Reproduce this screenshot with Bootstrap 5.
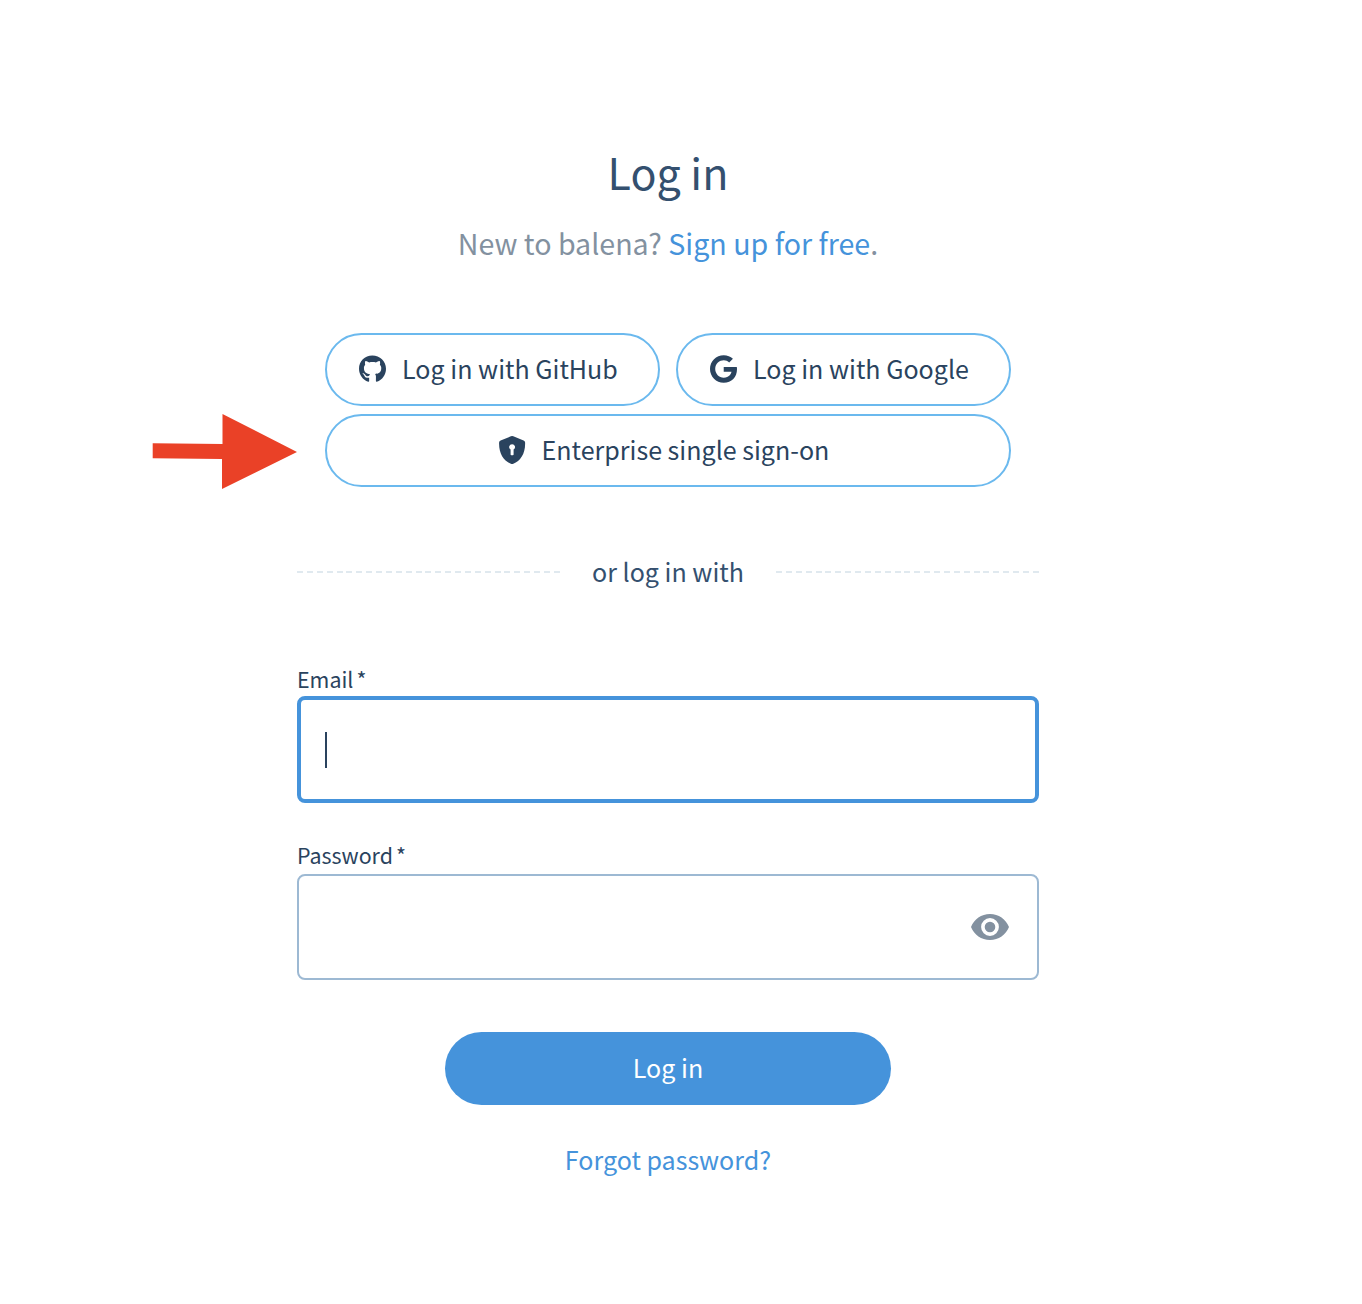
<!DOCTYPE html>
<html lang="en">
<head>
<meta charset="utf-8">
<meta name="viewport" content="width=device-width, initial-scale=1">
<title>Log in</title>
<link href="https://cdn.jsdelivr.net/npm/bootstrap@5.3.0/dist/css/bootstrap.min.css" rel="stylesheet">
<style>
  body { font-family: "Noto Sans CJK SC", "Noto Sans", sans-serif; color: #2a435e; background: #fff; font-size: 25.05px; line-height: 36px; padding: 141px 26px 0 0; min-height: 1304px; }
  .login-panel { width: 742px; }
  .login-title { font-size: 43px; line-height: 60px; font-weight: 400; color: #34506f; margin-bottom: 20px; }
  .login-sub { font-size: 28.6px; line-height: 44px; color: #8391a0; margin-bottom: 68px; }
  .blue-link { color: #4593db; }
  .providers { width: 686px; gap: 8px 16px; }
  .btn-provider { --bs-btn-color: #2a435e; --bs-btn-border-color: #6bb9ee; --bs-btn-border-width: 2px; --bs-btn-hover-color: #2a435e; --bs-btn-hover-border-color: #4593db; height: 73px; font-size: 25.05px; line-height: 36px; padding: 0 8px 3px 0; }
  .btn-provider svg { margin: 2px 16px 0 0; width: 27px; height: 28px; }
  .or-row { margin: 66px 0 75px; gap: 32px; color: #34506f; }
  .dashes { height: 2px; margin-top: 2px; background: repeating-linear-gradient(90deg, #e0e9ef 0 6px, transparent 6px 9.88px); }
  .field-label { font-size: 21.4px; line-height: 30px; margin-bottom: 2px; }
  .field-label span { margin-left: 3px; }
  .field-box { border: 2px solid #9db9d3; border-radius: 8px; height: 106px; padding: 0 26px; }
  .field-box:focus { box-shadow: none; }
  .field-active, .field-active:focus { border: 4px solid #4593db; height: 107px; }
  .text-caret { left: 28px; top: 36px; width: 2px; height: 36px; background: #2a435e; }
  .eye-toggle { right: 30px; top: 40px; width: 38px; height: 26px; }
  .btn-login { --bs-btn-bg: #4593db; --bs-btn-color: #fff; --bs-btn-hover-bg: #3a83c8; --bs-btn-hover-color: #fff; width: 446px; height: 73px; font-size: 25.05px; line-height: 36px; border: 0; padding: 0 0 3px; margin-top: 52px; }
  .pointer-arrow { left: -145px; top: 81px; width: 145px; height: 75px; }
</style>
</head>
<body>
<main class="login-panel mx-auto text-center">
  <h1 class="login-title">Log in</h1>
  <p class="login-sub">New to balena? <a href="#" class="blue-link text-decoration-none">Sign up for free</a>.</p>

  <section class="position-relative">
    <svg class="pointer-arrow position-absolute" viewBox="0 0 145 75" aria-hidden="true"><path fill="#ea4127" d="M.7 29.3 70.5 30V0L145 38 70 75V45L.7 44.3z"/></svg>
    <div class="providers d-flex flex-wrap mx-auto">
      <button type="button" class="btn btn-provider rounded-pill bg-white flex-fill d-flex align-items-center justify-content-center" style="flex-basis:335px">
        <svg viewBox="0 8 496 500" fill="currentColor" aria-hidden="true"><path d="M244.8 8C106.1 8 0 113.3 0 252c0 110.900 69.800 205.800 169.500 239.200 12.800 2.300 17.300-5.600 17.300-12.100 0-6.200-.3-40.400-.3-61.400 0 0-70 15-84.700-29.800 0 0-11.400-29.100-27.800-36.600 0 0-22.900-15.700 1.600-15.400 0 0 24.900 2 38.600 25.800 21.900 38.600 58.600 27.500 72.900 20.900 2.300-16 8.800-27.100 16-33.700-55.900-6.200-112.300-14.300-112.300-110.500 0-27.500 7.600-41.300 23.600-58.900-2.600-6.500-11.100-33.300 2.600-67.900 20.900-6.500 69 27 69 27 20-5.600 41.500-8.500 62.800-8.500s42.800 2.900 62.800 8.500c0 0 48.100-33.600 69-27 13.700 34.700 5.200 61.400 2.600 67.900 16 17.700 25.800 31.500 25.800 58.900 0 96.500-58.900 104.200-114.800 110.500 9.200 7.900 17 22.900 17 46.400 0 33.700-.3 75.400-.3 83.600 0 6.500 4.600 14.400 17.300 12.100C428.200 457.800 496 362.900 496 252 496 113.300 383.500 8 244.800 8z"/></svg>
        <span>Log in with GitHub</span>
      </button>
      <button type="button" class="btn btn-provider rounded-pill bg-white flex-fill d-flex align-items-center justify-content-center" style="flex-basis:335px">
        <svg viewBox="0 4 488 504" fill="currentColor" aria-hidden="true"><path d="M488 261.8C488 403.3 391.1 504 248 504 110.8 504 0 393.2 0 256S110.8 8 248 8c66.8 0 123 24.5 166.3 64.9l-67.5 64.9C258.5 52.6 94.3 116.6 94.3 256c0 86.5 69.1 156.6 153.7 156.6 98.2 0 135-70.4 140.8-106.9H248v-85.3h236.1c2.3 12.7 3.9 24.9 3.9 41.4z"/></svg>
        <span>Log in with Google</span>
      </button>
      <button type="button" class="btn btn-provider rounded-pill bg-white w-100 d-flex align-items-center justify-content-center">
        <svg viewBox="0 0 27 28" fill="currentColor" fill-rule="evenodd" aria-hidden="true"><path d="M13.100 0q.6 0 1.200.3l10.300 4.100q1.400.6 1.500 2.100C26.500 17.500 21.500 24.800 14.300 27.800q-1.200.4-2.400 0C4.700 24.800-.3 17.500.1 6.500Q.2 5 1.600 4.400L11.900.3q.6-.3 1.200-.3zM13.100 8.200a2.900 2.900 0 0 0-1.500 5.400v4.800q0 .8.8.8h1.400q.8 0 .8-.8v-4.800a2.900 2.900 0 0 0-1.500-5.400z"/></svg>
        <span>Enterprise single sign-on</span>
      </button>
    </div>
  </section>

  <div class="or-row d-flex align-items-center">
    <div class="dashes flex-fill"></div>
    <span>or log in with</span>
    <div class="dashes flex-fill"></div>
  </div>

  <form class="text-start">
    <label for="email" class="field-label d-block">Email<span>*</span></label>
    <div class="position-relative">
      <input id="email" type="email" class="form-control field-box field-active">
      <div class="text-caret position-absolute"></div>
    </div>
    <label for="password" class="field-label d-block" style="margin-top:37px;margin-bottom:4px">Password<span>*</span></label>
    <div class="position-relative">
      <input id="password" type="password" class="form-control field-box">
      <svg class="eye-toggle position-absolute" viewBox="0 0 38 26" aria-hidden="true"><path fill="#8391a0" fill-rule="evenodd" d="M19 0C10.400 0 3.100 5.200 0 13c3.100 7.800 10.400 13 19 13s15.900-5.200 19-13C34.900 5.200 27.600 0 19 0zm0 21.900a8.900 8.900 0 1 1 0-17.800 8.900 8.900 0 0 1 0 17.800zm0-14.200a5.300 5.300 0 1 0 0 10.600 5.300 5.300 0 0 0 0-10.600z"/></svg>
    </div>
    <button type="button" class="btn btn-login rounded-pill d-block mx-auto">Log in</button>
  </form>
  <a href="#" class="blue-link text-decoration-none d-block" style="margin-top:36px">Forgot password?</a>
</main>
<script src="https://cdn.jsdelivr.net/npm/bootstrap@5.3.0/dist/js/bootstrap.bundle.min.js"></script>
</body>
</html>
